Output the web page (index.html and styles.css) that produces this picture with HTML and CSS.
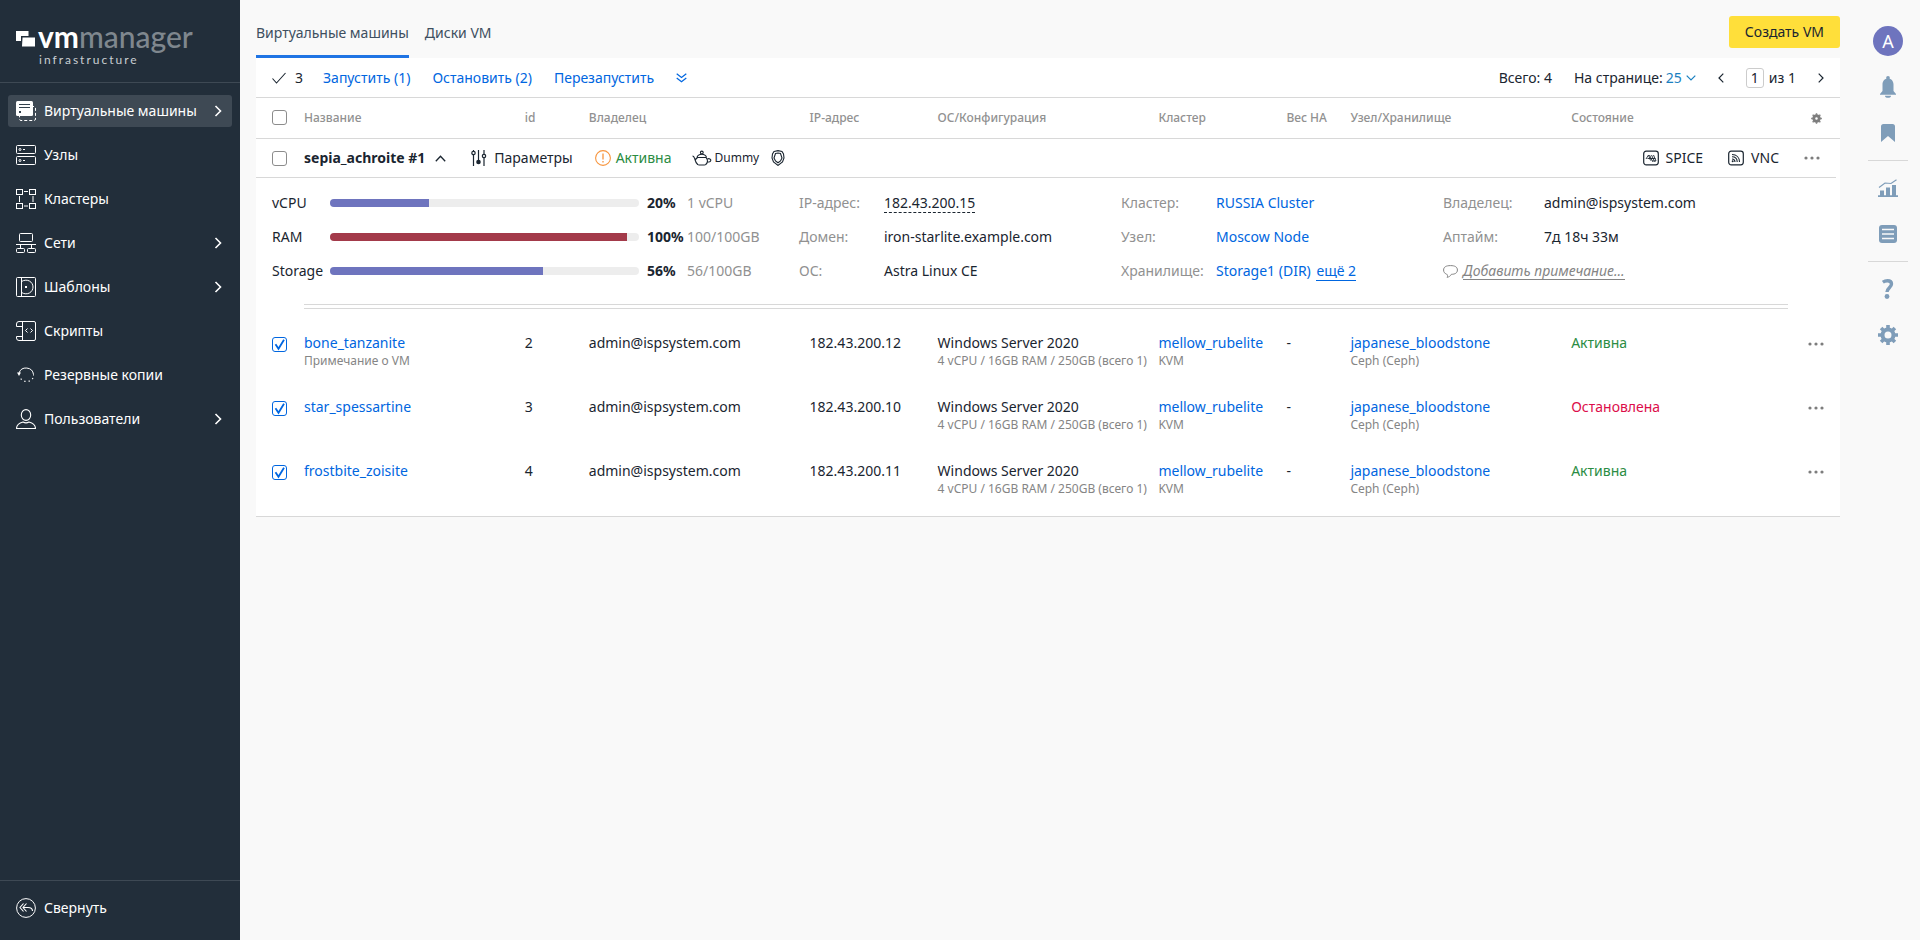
FILE: index.html
```html
<!DOCTYPE html>
<html lang="ru">
<head>
<meta charset="utf-8">
<meta name="viewport" content="width=device-width, initial-scale=1">
<title>VMmanager</title>
<link rel="stylesheet" href="styles.css">
</head>
<body class="app">
<svg class="sprite" aria-hidden="true">
  <symbol id="chevron-right" viewBox="0 0 8 12"><path d="M1.5 1l5 5-5 5" fill="none" stroke="currentColor" stroke-width="1.6"/></symbol>
  <symbol id="dots" viewBox="0 0 16 4"><g fill="currentColor"><circle cx="2" cy="2" r="1.6"/><circle cx="8" cy="2" r="1.6"/><circle cx="14" cy="2" r="1.6"/></g></symbol>
</svg>

<aside class="sidebar">
  <a class="logo" href="#" aria-label="vmmanager infrastructure">
    <svg class="logo-mark" width="20" height="16" viewBox="0 0 20 16"><path d="M0 0h12.500v5H5v5H0z" fill="#fff"/><path d="M6.500 6.500h12.500v9H6z" fill="#fff"/></svg>
    <span class="logo-words">
      <span class="logo-name"><b>vm</b>manager</span>
      <span class="logo-sub">infrastructure</span>
    </span>
  </a>
  <nav class="nav">
    <a class="nav-item active" href="#">
      <svg class="nav-icon" viewBox="0 0 20 20"><rect x="3.500" y="5.500" width="16" height="14" rx="1.500" fill="none" stroke="#fff" stroke-dasharray="3 2"/><rect width="17" height="15" rx="1.500" fill="#fff"/><path d="M3 3.500h11M3 6.500h11" stroke="#33414d"/><path d="M3 10h2v2H3z" fill="#33414d"/></svg>
      <span>Виртуальные машины</span><svg class="chev" width="8" height="12"><use href="#chevron-right"/></svg>
    </a>
    <a class="nav-item" href="#">
      <svg class="nav-icon" viewBox="0 0 20 20"><g fill="none" stroke="#fff"><rect x=".5" y=".5" width="19" height="8" rx="1"/><rect x=".5" y="11.500" width="19" height="8" rx="1"/><circle cx="4" cy="4.500" r="1"/><circle cx="4" cy="15.500" r="1"/></g><path d="M7 4h2v1H7zM7 15h2v1H7z" fill="#fff"/></svg>
      <span>Узлы</span>
    </a>
    <a class="nav-item" href="#">
      <svg class="nav-icon" viewBox="0 0 20 20"><g fill="none" stroke="#fff"><rect x=".5" y=".5" width="6" height="5"/><rect x="13.500" y=".5" width="6" height="5"/><rect x=".5" y="14.500" width="6" height="5"/><rect x="13.500" y="14.500" width="6" height="5"/><path d="M8 2.500h4M8 17h4M3.500 7v6M17 7v6"/></g></svg>
      <span>Кластеры</span>
    </a>
    <a class="nav-item" href="#">
      <svg class="nav-icon" viewBox="0 0 20 20"><g fill="none" stroke="#fff"><rect x="3.500" y=".5" width="13" height="8" rx="1"/><path d="M0 11.500h20M4.500 11.500v4M15.500 11.500v4"/><rect x=".5" y="15.500" width="8" height="4" rx="1"/><rect x="11.500" y="15.500" width="8" height="4" rx="1"/></g></svg>
      <span>Сети</span><svg class="chev" width="8" height="12"><use href="#chevron-right"/></svg>
    </a>
    <a class="nav-item" href="#">
      <svg class="nav-icon" viewBox="0 0 20 20"><g fill="none" stroke="#fff"><rect x=".5" y=".5" width="19" height="19" rx="1"/><path d="M5.500 .5v19M5.500 4.500c6-3.500 11.500.5 11.500 5.500s-5.500 9-11.500 5.500"/></g><path d="M9 9h2v2H9z" fill="#fff"/></svg>
      <span>Шаблоны</span><svg class="chev" width="8" height="12"><use href="#chevron-right"/></svg>
    </a>
    <a class="nav-item" href="#">
      <svg class="nav-icon" viewBox="0 0 20 20"><g fill="none" stroke="#fff"><path d="M6.500 5.500h-6V3A2.500 2.500 0 0 1 3 .5h15A1.500 1.500 0 0 1 19.500 2v16a1.500 1.500 0 0 1-1.500 1.500H3A2.500 2.500 0 0 1 .5 17v-1.500h6M6.500 .5v19"/><path d="M11.500 7.500L9.500 9.500l2 2M14.500 7.500l2 2-2 2"/></g></svg>
      <span>Скрипты</span>
    </a>
    <a class="nav-item" href="#">
      <svg class="nav-icon" viewBox="0 0 20 20"><path d="M3 8a7.500 7.500 0 0 1 14.500 1.500v1" fill="none" stroke="#fff"/><path d="M1 7.500h4L3 11z" fill="#fff"/><path d="M17 13a7.500 7.500 0 0 1-13-.5" fill="none" stroke="#fff" stroke-width="1.200" stroke-dasharray="1.300 3"/></svg>
      <span>Резервные копии</span>
    </a>
    <a class="nav-item" href="#">
      <svg class="nav-icon" viewBox="0 0 20 20"><g fill="none" stroke="#fff" stroke-width="1.100"><ellipse cx="10" cy="6" rx="4.700" ry="5.400"/><path d="M.5 19.500c0-4 3-5.500 6.500-6.500 2 1.200 4 1.200 6 0 3.500 1 6.500 2.500 6.500 6.500z"/></g></svg>
      <span>Пользователи</span><svg class="chev" width="8" height="12"><use href="#chevron-right"/></svg>
    </a>
  </nav>
  <div class="sidebar-foot">
    <button class="nav-item" type="button">
      <svg class="nav-icon" viewBox="0 0 20 20"><g fill="none" stroke="#fff"><circle cx="10" cy="10" r="9.400"/><path d="M7.500 5.500L4 9.500l3.500 4M10.500 5.500L7 9.500l3.500 4M7.500 9.500h4.500c3 0 4.500 1.500 4.500 3.500" stroke-width="1.100"/></g></svg>
      <span>Свернуть</span>
    </button>
  </div>
</aside>

<main class="main">
  <header class="top">
    <nav class="tabs"><a class="tab current" href="#">Виртуальные машины</a><a class="tab" href="#">Диски VM</a></nav>
    <button class="create" type="button">Создать VM</button>
  </header>

  <section class="card">
    <div class="toolbar">
      <span class="picked"><svg width="14" height="12" viewBox="0 0 14 12"><path d="M.5 6.500l4 4.500L13.500 1" fill="none" stroke="currentColor" stroke-width="1.100"/></svg>3</span>
      <div class="bulk">
        <button class="link" type="button">Запустить (1)</button>
        <button class="link" type="button">Остановить (2)</button>
        <button class="link" type="button">Перезапустить</button>
        <button class="link" type="button" aria-label="Ещё"><svg width="11" height="10" viewBox="0 0 11 10"><path d="M.7.7l4.800 3.800L10.300.7M.7 5l4.800 3.800L10.300 5" fill="none" stroke="currentColor" stroke-width="1.200"/></svg></button>
      </div>
      <span class="total">Всего: 4</span>
      <div class="per-page">
        <label for="size">На странице:</label>
        <select id="size" class="size"><option>25</option><option>50</option></select>
        <svg width="10" height="6" viewBox="0 0 10 6"><path d="M.7.7L5 5 9.300.7" fill="none" stroke="currentColor" stroke-width="1.200"/></svg>
      </div>
      <div class="pager">
        <button class="step" type="button" aria-label="Назад"><svg width="6" height="10" viewBox="0 0 6 10"><path d="M5.300.7L1 5l4.300 4.300" fill="none" stroke="currentColor" stroke-width="1.200"/></svg></button>
        <label class="page"><input class="page-input" value="1" aria-label="Страница">из 1</label>
        <button class="step" type="button" aria-label="Вперёд"><svg width="6" height="10" viewBox="0 0 6 10"><path d="M.7.7L5 5 .7 9.300" fill="none" stroke="currentColor" stroke-width="1.200"/></svg></button>
      </div>
    </div>

    <table class="vms">
      <colgroup><col class="c-check"><col><col class="c-small"><col><col class="c-mid"><col><col class="c-mid"><col class="c-small"><col><col><col class="c-act"></colgroup>
      <thead>
        <tr>
          <th class="check"><input type="checkbox" class="box" aria-label="Выбрать все"></th>
          <th>Название</th><th>id</th><th>Владелец</th><th>IP-адрес</th><th>ОС/Конфигурация</th><th>Кластер</th><th>Вес HA</th><th>Узел/Хранилище</th><th>Состояние</th>
          <th class="act"><button class="icon-btn" type="button" aria-label="Настройка таблицы"><svg width="11" height="11" viewBox="-6 -6 12 12"><g stroke="currentColor"><circle r="3" fill="none" stroke-width="3.200"/><path d="M0-4v-1.800M0 4v1.800M-4 0h-1.800M4 0h1.800M3-3l1.200-1.200M3 3l1.200 1.200M-3 3l-1.200 1.200M-3-3l-1.200-1.200" stroke-width="1.600"/></g></svg></button></th>
        </tr>
      </thead>
      <tbody>
        <tr class="open-row">
          <td class="check"><input type="checkbox" class="box" aria-label="sepia_achroite #1"></td>
          <td colspan="10">
            <div class="open-head">
              <button class="vm-title" type="button">sepia_achroite #1 <svg width="11" height="7" viewBox="0 0 11 7"><path d="M.8 6.200L5.500 1.200l4.700 5" fill="none" stroke="currentColor" stroke-width="1.300"/></svg></button>
              <button class="tool params" type="button"><svg width="16" height="16" viewBox="0 0 16 16"><g fill="none" stroke="currentColor" stroke-width="1.200"><path d="M2.500 5v11M2.500 0v1M7.500 0v10M13 0v4M13 8v8"/><circle cx="2.500" cy="3" r="1.700"/><circle cx="13" cy="6" r="1.700"/></g><circle cx="7.500" cy="12" r="2.300" fill="currentColor"/></svg>Параметры</button>
              <span class="status"><svg width="16" height="16" viewBox="0 0 16 16"><circle cx="8" cy="8" r="7.400" fill="none" stroke="#f7953e" stroke-width="1.100"/><path d="M8 3.500v6M8 11v1.500" stroke="#f7953e" stroke-width="1.300"/></svg>Активна</span>
              <button class="tool dummy" type="button"><svg width="20" height="16" viewBox="0 0 20 16"><g fill="none" stroke="currentColor" stroke-width="1.100"><path d="M5.500 7.500h8.500c2 2.500 2 5-.2 7-.3.400-.8.500-1.500.5H7.200c-.7 0-1.200-.1-1.500-.5-2.700-2.500-2.500-5-3.200-6.500C2 6.800 1.500 6 .5 6M5.500 7.500L3.500 9.500M5 7.500c.5-2 2-3.300 4.800-3.300s4.200 1.300 4.700 3.300M15.300 9c2-.8 3.700 0 3.500 1.500-.3 1.700-2.300 1.800-4 1.800"/><circle cx="9.800" cy="2.500" r="1.400"/></g></svg>Dummy</button>
              <button class="icon-btn dark" type="button" aria-label="Защита"><svg width="14" height="16" viewBox="0 0 14 16"><g fill="none" stroke="currentColor" stroke-width="1.100"><path d="M3 1.500L7 .6l4 .9 1.500 2.500.5 4-1.500 4L7 15.400 2.500 12 1 8l.5-4z"/><path d="M4.500 3.500L7 3l2.500.5L11 8l-1.500 3L7 12.800 4.500 11 3 8z"/></g></svg></button>
              <span class="consoles">
                <button class="tool" type="button"><svg width="16" height="16" viewBox="0 0 16 16"><rect x=".7" y="1.200" width="14.600" height="13.600" rx="2.500" fill="none" stroke="currentColor" stroke-width="1.200"/><path d="M3 9l2.500-4 2 5.500M6.500 5l3 6.500M8.500 5l3 6.500M10.500 5l2.500 6M4.500 8.500h8M9 11h4" fill="none" stroke="currentColor" stroke-width=".9"/></svg>SPICE</button>
                <button class="tool" type="button"><svg width="16" height="16" viewBox="0 0 16 16"><rect x=".7" y="1.200" width="14.600" height="13.600" rx="2.500" fill="none" stroke="currentColor" stroke-width="1.200"/><path d="M4 9c2 0 3 1 3 3M4 6.800c3.200 0 5.200 2 5.200 5.200M4 4.500c4.500 0 7.500 3 7.500 7.500" fill="none" stroke="currentColor" stroke-width="1.100"/><circle cx="4.700" cy="11.200" r="1" fill="currentColor"/></svg>VNC</button>
                <button class="icon-btn" type="button" aria-label="Действия"><svg width="16" height="4"><use href="#dots"/></svg></button>
              </span>
            </div>
          </td>
        </tr>
        <tr>
          <td colspan="11">
            <div class="details">
              <div class="usage">
                <span>vCPU</span><span class="bar"><span class="fill" style="width:32%"></span></span><b>20%</b><span class="muted">1 vCPU</span>
                <span>RAM</span><span class="bar"><span class="fill full" style="width:96%"></span></span><b>100%</b><span class="muted">100/100GB</span>
                <span>Storage</span><span class="bar"><span class="fill" style="width:69%"></span></span><b>56%</b><span class="muted">56/100GB</span>
              </div>
              <dl class="facts net">
                <dt>IP-адрес:</dt><dd><span class="hint">182.43.200.15</span></dd>
                <dt>Домен:</dt><dd>iron-starlite.example.com</dd>
                <dt>ОС:</dt><dd>Astra Linux CE</dd>
              </dl>
              <dl class="facts place">
                <dt>Кластер:</dt><dd><a href="#">RUSSIA Cluster</a></dd>
                <dt>Узел:</dt><dd><a href="#">Moscow Node</a></dd>
                <dt>Хранилище:</dt><dd><a href="#">Storage1 (DIR)</a> <a class="more" href="#">ещё 2</a></dd>
              </dl>
              <div class="owner-block">
                <dl class="facts owner">
                  <dt>Владелец:</dt><dd>admin@ispsystem.com</dd>
                  <dt>Аптайм:</dt><dd>7д 18ч 33м</dd>
                </dl>
                <button class="note" type="button"><svg width="15" height="13" viewBox="0 0 15 13"><path d="M3.500 9C1.500 8.500.6 7 .6 5 .6 2 3 .6 7.500.6s6.900 1.400 6.900 4.400-2.400 4.300-6 4.300C7.500 11 6 12 4 12.300c.8-.8.800-2.300-.5-3.300z" fill="none" stroke="currentColor"/></svg><span>Добавить примечание...</span></button>
              </div>
            </div>
            <div class="double-rule"></div>
          </td>
        </tr>
        <tr class="vm">
          <td class="check"><input type="checkbox" class="box" checked aria-label="bone_tanzanite"></td>
          <td><a href="#">bone_tanzanite</a><small>Примечание о VM</small></td><td>2</td><td>admin@ispsystem.com</td><td>182.43.200.12</td>
          <td>Windows Server 2020<small>4 vCPU / 16GB RAM / 250GB (всего 1)</small></td><td><a href="#">mellow_rubelite</a><small>KVM</small></td><td>-</td><td><a href="#">japanese_bloodstone</a><small>Ceph (Ceph)</small></td><td class="on">Активна</td>
          <td class="act"><button class="icon-btn" type="button" aria-label="Действия"><svg width="16" height="4"><use href="#dots"/></svg></button></td>
        </tr>
        <tr class="vm">
          <td class="check"><input type="checkbox" class="box" checked aria-label="star_spessartine"></td>
          <td><a href="#">star_spessartine</a></td><td>3</td><td>admin@ispsystem.com</td><td>182.43.200.10</td>
          <td>Windows Server 2020<small>4 vCPU / 16GB RAM / 250GB (всего 1)</small></td><td><a href="#">mellow_rubelite</a><small>KVM</small></td><td>-</td><td><a href="#">japanese_bloodstone</a><small>Ceph (Ceph)</small></td><td class="off">Остановлена</td>
          <td class="act"><button class="icon-btn" type="button" aria-label="Действия"><svg width="16" height="4"><use href="#dots"/></svg></button></td>
        </tr>
        <tr class="vm">
          <td class="check"><input type="checkbox" class="box" checked aria-label="frostbite_zoisite"></td>
          <td><a href="#">frostbite_zoisite</a></td><td>4</td><td>admin@ispsystem.com</td><td>182.43.200.11</td>
          <td>Windows Server 2020<small>4 vCPU / 16GB RAM / 250GB (всего 1)</small></td><td><a href="#">mellow_rubelite</a><small>KVM</small></td><td>-</td><td><a href="#">japanese_bloodstone</a><small>Ceph (Ceph)</small></td><td class="on">Активна</td>
          <td class="act"><button class="icon-btn" type="button" aria-label="Действия"><svg width="16" height="4"><use href="#dots"/></svg></button></td>
        </tr>
      </tbody>
    </table>
  </section>
</main>

<aside class="rail">
  <button class="rail-item" type="button"><span class="avatar">A</span></button>
  <button class="rail-item" type="button" aria-label="Уведомления"><svg width="16" height="22" viewBox="0 0 16 22"><g fill="currentColor"><circle cx="8" cy="2" r="1.900"/><path d="M8 2.500c3.500.3 5.500 2.500 5.500 6V15l2.500 3v.700H0V18l2.500-3V8.500c0-3.500 2-5.700 5.500-6zM5 19.700h6a3 2 0 0 1-6 0z"/></g></svg></button>
  <button class="rail-item" type="button" aria-label="Закладки"><svg width="14" height="18" viewBox="0 0 14 18"><path d="M2.500 0h9A2.500 2.500 0 0 1 14 2.500V18l-7-6-7 6V2.500A2.500 2.500 0 0 1 2.500 0z" fill="currentColor"/></svg></button>
  <hr class="rail-rule">
  <button class="rail-item" type="button" aria-label="Статистика"><svg width="20" height="18" viewBox="0 0 20 18"><path d="M0 16.200h20V18H0zM2 11.500h4V17H2zM8 8.500h4V17H8zM14 6h4v11h-4z" fill="currentColor"/><path d="M1 8.500L7 4l6 .5L18.500.7" fill="none" stroke="currentColor" stroke-width="1.200"/></svg></button>
  <button class="rail-item" type="button" aria-label="Задачи"><svg width="18" height="18" viewBox="0 0 18 18"><rect width="18" height="18" rx="3" fill="currentColor"/><path d="M3 4.500h12M3 9h12M3 13.500h12" stroke="#f9f9f9" stroke-width="1.300"/></svg></button>
  <hr class="rail-rule">
  <button class="rail-item" type="button" aria-label="Справка"><svg width="12" height="20" viewBox="0 0 12 20"><path d="M.8 3.200C2.500 2 4 1.700 5.500 1.700c2.500 0 4 1.300 4 3.300 0 3.500-4.500 4-4.500 8" fill="none" stroke="currentColor" stroke-width="3.400"/><circle cx="5" cy="17.500" r="2.400" fill="currentColor"/></svg></button>
  <button class="rail-item" type="button" aria-label="Настройки"><svg width="20" height="20" viewBox="-10 -10 20 20"><g stroke="currentColor"><circle r="5.500" fill="none" stroke-width="4"/><path d="M0-6v-4M0 6v4M-6 0h-4M6 0h4M4.400-4.400l2.500-2.500M4.400 4.400l2.500 2.500M-4.400 4.400l-2.500 2.500M-4.400-4.400l-2.500-2.500" stroke-width="3.600"/></g></svg></button>
</aside>
</body>
</html>
```
FILE: styles.css
```css
* { box-sizing: border-box; }

:root {
  --text: #1a2530;
  --muted: #919191;
  --line: #d8d8d8;
  --link: #0066e0;
  --navy: #222e3a;
}

.app {
  margin: 0;
  min-height: 100vh;
  display: flex;
  background: #f9f9f9;
  color: var(--text);
  font: 14px/20px "Noto Sans", "Open Sans", sans-serif;
}

.sprite { position: absolute; width: 0; height: 0; }

a { color: var(--link); text-decoration: none; }
svg { display: block; flex: none; }

button {
  margin: 0;
  padding: 0;
  border: 0;
  background: none;
  color: inherit;
  font: inherit;
  cursor: pointer;
}

/* Sidebar */
.sidebar {
  flex: none;
  width: 240px;
  display: flex;
  flex-direction: column;
  background: var(--navy);
  color: #fff;
}

.logo {
  display: flex;
  gap: 2px;
  height: 83px;
  padding: 19px 16px 0;
  border-bottom: 1px solid #3e4954;
  font-family: Lato, sans-serif;
}

.logo-mark { margin-top: 12px; }
.logo-words { display: flex; flex-direction: column; }
.logo-name { color: #7f878e; font-size: 30px; font-weight: 500; line-height: 34px; }
.logo-name b { color: #fff; }
.logo-sub { padding-left: 1px; color: #c9ced2; font-size: 12px; line-height: 14px; letter-spacing: 2px; }

.nav { display: flex; flex-direction: column; gap: 12px; padding: 12px 8px; }

.nav-item {
  display: flex;
  align-items: center;
  gap: 8px;
  width: 100%;
  height: 32px;
  padding: 0 10px 0 8px;
  border-radius: 3px;
  color: #fff;
}

.nav-item.active { background: #3e4954; }
.nav-icon { width: 20px; height: 20px; }
.chev { margin-left: auto; }
.sidebar-foot { margin-top: auto; padding: 11px 8px 16px; border-top: 1px solid #3e4954; }

/* Page header */
.main { flex: 1; min-width: 0; padding: 0 16px; }
.top { display: flex; justify-content: space-between; height: 58px; }
.tabs { display: flex; gap: 16px; }
.tab { padding-top: 23px; border-bottom: 3px solid transparent; color: #3e4f60; }
.tab.current { border-color: #1f74e4; }
.create { height: 32px; margin-top: 16px; padding: 0 16px; border-radius: 3px; background: #ffdf3a; }

/* Card */
.card { padding-bottom: 15px; background: #fff; border-bottom: 1px solid var(--line); }

.toolbar {
  display: flex;
  align-items: center;
  height: 40px;
  padding: 0 16px;
  border-bottom: 1px solid var(--line);
}

.picked { display: flex; align-items: center; gap: 9px; margin-right: 20px; }
.bulk { display: flex; align-items: center; gap: 22px; }
.link { color: var(--link); }
.total { margin-left: auto; }
.per-page { display: flex; align-items: center; gap: 3px; margin-left: 22px; color: #1a80c0; }
.per-page label { color: var(--text); }
.size { appearance: none; width: 17px; padding: 0; border: 0; background: none; color: inherit; font: inherit; }
.pager { display: flex; align-items: center; gap: 22px; margin-left: 22px; }
.page { display: flex; align-items: center; gap: 5px; }

.page-input {
  width: 18px;
  height: 20px;
  padding: 0;
  border: 1px solid #ccc;
  border-radius: 3px;
  color: inherit;
  font: inherit;
  text-align: center;
}

/* Table */
.vms { width: 100%; table-layout: fixed; border-collapse: collapse; }
.c-check, .c-act { width: 48px; }
.c-small { width: 64px; }
.c-mid { width: 128px; }

.vms th {
  height: 40px;
  padding: 0;
  border-bottom: 1px solid var(--line);
  color: var(--muted);
  font-size: 12px;
  font-weight: 500;
  text-align: left;
  white-space: nowrap;
}

.vms td { padding: 0; white-space: nowrap; }
.vms .check { padding-left: 16px; }
.vms .act { text-align: center; }

.box {
  display: block;
  appearance: none;
  width: 15px;
  height: 15px;
  margin: 0;
  border: 1px solid #8c8c8c;
  border-radius: 3px;
  background: #fff;
}

.box:checked {
  border-color: var(--link);
  background: url("data:image/svg+xml,%3Csvg xmlns='http://www.w3.org/2000/svg' viewBox='0 0 13 13'%3E%3Cpath d='M2.500 6.200l3 4.600 5.500-9' fill='none' stroke='%230066e0' stroke-width='1.800'/%3E%3C/svg%3E") center / 13px 13px no-repeat;
}

.icon-btn { display: inline-flex; color: #7d7d7d; vertical-align: middle; }
.icon-btn.dark { color: var(--text); }

.open-row td { height: 40px; }
.open-head { display: flex; align-items: center; height: 39px; padding-right: 20px; }
.open-row { background: linear-gradient(var(--line), var(--line)) left bottom / calc(100% - 4px) 1px no-repeat; }
.vm-title { display: flex; align-items: center; gap: 10px; margin-right: 25px; font-weight: 700; }
.tool { display: flex; align-items: center; gap: 7px; }
.params { margin-right: 22px; }
.status { display: flex; align-items: center; gap: 5px; margin-right: 20px; color: #2b8c43; }
.dummy { gap: 3px; margin-right: 12px; font-size: 12px; }
.consoles { display: flex; align-items: center; gap: 25px; margin-left: auto; }

/* Expanded machine */
.details {
  display: grid;
  grid-template-columns: 527fr 322fr 322fr 397fr;
  padding: 17px 0 18px 16px;
  line-height: 16px;
}

.usage {
  display: grid;
  grid-template-columns: 58px 1fr 48px 112px;
  align-items: center;
  align-content: start;
  row-gap: 18px;
}

.usage b { padding-left: 8px; }
.muted { color: var(--muted); }
.bar { height: 8px; border-radius: 4px; background: #ededed; overflow: hidden; }
.fill { display: block; height: 100%; background: #6e74be; }
.fill.full { background: #a33a4a; }

.facts { display: grid; align-content: start; row-gap: 18px; margin: 0; }
.facts dt { color: var(--muted); }
.facts dd { margin: 0; }
.net { grid-template-columns: 85px 1fr; }
.place { grid-template-columns: 95px 1fr; }
.owner { grid-template-columns: 101px 1fr; }
.hint { border-bottom: 1px dashed var(--text); }
.more { margin-left: 2px; border-bottom: 1px solid; }
.owner-block { display: flex; flex-direction: column; align-items: flex-start; gap: 18px; }
.note { display: flex; align-items: center; gap: 5px; color: #858585; font-style: italic; line-height: 16px; }
.note span { border-bottom: 1px solid; }
.double-rule { height: 5px; margin: 6px 52px 0 48px; border: 1px solid var(--line); border-width: 1px 0; }

/* Machine rows */
.vm td { height: 64px; padding-top: 24px; vertical-align: top; }
.vm .check { padding-top: 28px; }
.vm small { display: block; color: #858585; font-size: 12px; line-height: 16px; }
.vm .on { color: #2b8c43; }
.vm .off { color: #dc0d4a; }

/* Right rail */
.rail { flex: none; display: flex; flex-direction: column; width: 64px; padding: 18px 12px; color: #7f9db9; }
.rail-item { display: flex; align-items: center; justify-content: center; height: 46px; }
.rail-rule { width: 40px; margin: 4px 0; border: 0; border-top: 1px solid var(--line); }

.avatar {
  display: flex;
  align-items: center;
  justify-content: center;
  width: 30px;
  height: 30px;
  border-radius: 50%;
  background: #6e74be;
  color: #fff;
  font-size: 18px;
}
```
